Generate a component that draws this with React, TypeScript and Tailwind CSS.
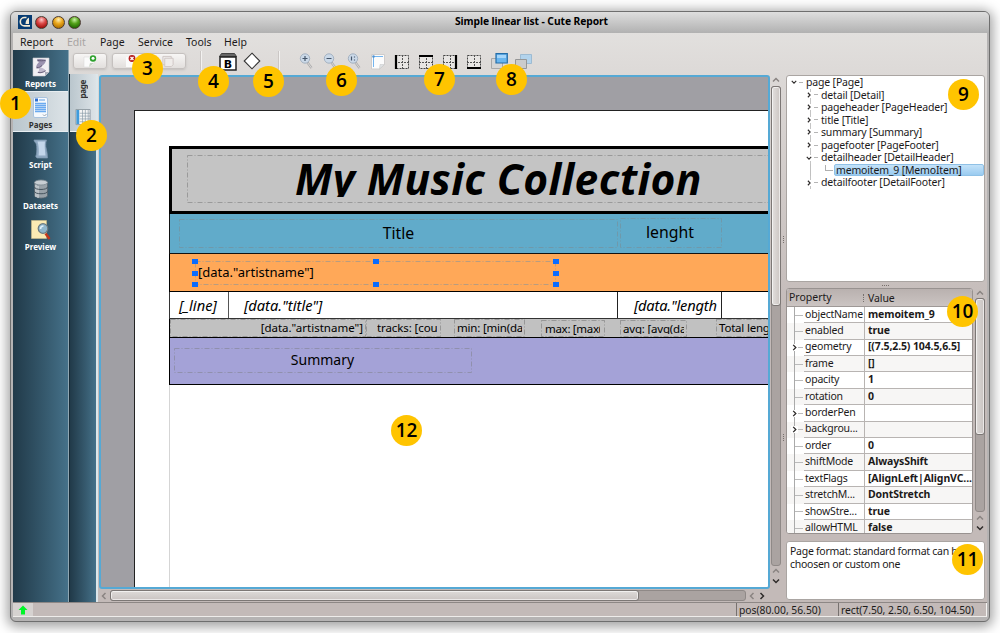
import React from "react";

type ItemProps = { className: string; frame?: string; dash?: string; children?: React.ReactNode };

/** Report item placed freely on the page canvas, with a dash-dot outline. */
function Item({ className, frame = "rgba(110,110,110,.5)", dash = "5 2 1 2", children }: ItemProps) {
  return (
    <div className={`absolute ${className}`}>
      <svg className="absolute inset-0 h-full w-full">
        <rect x="0.5" y="0.5" width="100%" height="100%" fill="none" stroke={frame} strokeDasharray={dash} style={{ width: "calc(100% - 1px)", height: "calc(100% - 1px)" }} />
      </svg>
      {children}
    </div>
  );
}

function Chevron({ dir, className = "", color = "#2e2b2a" }: { dir: "up" | "down" | "left" | "right"; className?: string; color?: string }) {
  const d = { up: "M1 5.5 4 2.5 7 5.5", down: "M1 2.5 4 5.5 7 2.5", left: "M5.5 1 2.5 4 5.5 7", right: "M2.5 1 5.5 4 2.5 7" }[dir];
  return (
    <svg viewBox="0 0 8 8" className={`shrink-0 ${className}`} fill="none" stroke={color} strokeWidth="1.5">
      <path d={d} />
    </svg>
  );
}

function Badge({ n, className }: { n: number; className: string }) {
  return (
    <div className={`absolute z-20 flex h-[31px] w-[31px] items-center justify-center rounded-full bg-[#ffc400] font-['Open_Sans','Noto_Sans',sans-serif] text-[19px] leading-none font-semibold text-black ${className}`}>
      {n}
    </div>
  );
}

const navIcons: Record<string, React.ReactNode> = {
  Reports: (
    <svg viewBox="0 0 18 20" className="h-5 w-[18px]">
      <path d="M1 1h16v14l-4 4H1z" fill="#f1f0f4" stroke="#c9c9d2" strokeWidth=".6" />
      <path d="M17 15h-4v4z" fill="#a9acb9" />
      <path d="M5 2.500c3-.6 6-.6 9 .5 0 3-3 5-5 7-2 1.500-4 2-5 1 0-3 2-5 3-6-1 0-2-.8-2-2.500z" fill="#9b93b0" />
      <path d="M6 10c3 0 6 1 8 4-2 2-6 3-9 1.500 2-1 3-3 1-5.500z" fill="#c0bacd" />
      <path d="M5.500 3.200c2.500.8 5 .8 8 0M5 10.500c2 .5 3-.5 5-2M6 15.500c3 .5 5-.2 7.500-1.800" stroke="#5d5570" strokeWidth=".9" fill="none" />
    </svg>
  ),
  Pages: (
    <svg viewBox="0 0 15 21" className="h-[21px] w-[15px]">
      <rect x=".5" y=".5" width="14" height="20" rx="1.500" fill="#f5f9fd" stroke="#a9c3de" />
      <rect x="2" y="1.500" width="3" height="3" fill="#2c6ed0" />
      <path d="M6 3h6" stroke="#5f9ce0" />
      <path d="M2 6.500h11M2 8.500h11M2 10.500h11M2 12.500h11M2 14.500h11" stroke="#6aaaf0" strokeWidth="1.300" />
      <path d="M10 17.500l1.500 1.500 2-2" stroke="#9aa4b0" fill="none" />
    </svg>
  ),
  Script: (
    <svg viewBox="0 0 16 20" className="h-5 w-4">
      <path d="M1 1h12.500c-1 3-1 6-.2 9s1.200 6 1.200 9H4c-1.500-1-1.500-2-.7-3 .7-4 .7-8 0-11C2.800 3.500 1 3 1 1z" fill="#8fa9c2" stroke="#7f98b0" strokeWidth=".7" />
      <path d="M4.500 2.500h7.500c-.7 4 0 9 .5 14H5.500c.7-4 .3-10-1-14z" fill="#c3d6ea" />
    </svg>
  ),
  Datasets: (
    <svg viewBox="0 0 16 20" className="h-5 w-4">
      <path d="M1.500 3.500v13c0 3.500 13 3.500 13 0v-13z" fill="#98a2a9" stroke="#56646e" strokeWidth=".8" />
      <path d="M3 6v12M5 7v12" stroke="#d3d9dd" strokeWidth="1.200" />
      <ellipse cx="8" cy="3.500" rx="6.500" ry="2.500" fill="#c7ced3" stroke="#7c8992" strokeWidth=".8" />
      <path d="M1.500 8c0 3.300 13 3.300 13 0M1.500 12.300c0 3.300 13 3.300 13 0" stroke="#46545e" fill="none" />
    </svg>
  ),
  Preview: (
    <svg viewBox="0 0 20 20" className="h-5 w-5">
      <path d="M.5.500h15v18H.500z" fill="#fbeab3" stroke="#cdbd8c" strokeWidth=".6" />
      <path d="M14.500 13.500l4 5.500" stroke="#c4361c" strokeWidth="2.500" />
      <circle cx="12" cy="8.500" r="4.800" fill="#8fb6cc" stroke="#6c7a80" strokeWidth="1.200" />
      <path d="M9.500 9a3 3 0 0 1 3-3" stroke="#dfeffa" strokeWidth="1.600" fill="none" />
    </svg>
  ),
};

function NavItem({ name, active = false }: { name: string; active?: boolean }) {
  return (
    <div
      className={
        active
          ? "flex h-[41px] flex-col items-center justify-between border-y border-[#e8eef1] bg-linear-to-r from-[#bac6cd] to-[#dce3e7] pt-[5px] pb-[2px] text-[#303030]"
          : "flex h-[40.700px] flex-col items-center justify-between pt-[7px] pb-[3px] text-white"
      }
    >
      {navIcons[name]}
      <span className="text-[8px] leading-[9px] font-bold whitespace-nowrap">{name}</span>
    </div>
  );
}

function Zoomer({ sign, className = "" }: { sign: string; className?: string }) {
  return (
    <svg viewBox="0 0 14 16" className={`h-4 w-[14px] ${className}`}>
      <path d="M8.500 9.500l4 5.500" stroke="#aaa9aa" strokeWidth="2.200" />
      <path d="M8.500 9.500l4 5.500" stroke="#e6e6e6" strokeWidth=".8" />
      <circle cx="6" cy="5.500" r="4.700" fill="#cbd9e8" stroke="#a3b1c0" />
      <path d={sign} stroke="#44556a" strokeWidth="1.200" fill="none" />
    </svg>
  );
}

function GridIcon({ heavy }: { heavy: string }) {
  return (
    <svg viewBox="0 0 16 16" className="h-4 w-4">
      <rect x="1.500" y="1.500" width="13" height="13" fill="#e8e6e4" stroke="#444" strokeDasharray="2 1" />
      <path d="M8.500 1v14M1 8.500h14" stroke="#555" strokeDasharray="2 1" />
      <path d={heavy} stroke="#000" strokeWidth="2.200" />
    </svg>
  );
}

function Separator({ className = "" }: { className?: string }) {
  return <div className={`h-[19px] w-px bg-[#cbc7c5] shadow-[1px_0_0_#f3f2f1] ${className}`} />;
}

function Toolbar() {
  return (
    <div className="flex h-[25px] items-start pl-[4px]">
      <div className="mt-[3px] flex h-[16px] w-[34px] items-center justify-center rounded-[3px] border border-[#c5c1bf] bg-linear-to-b from-[#f7f6f5] to-[#e2dfdd] shadow-sm">
        <svg viewBox="0 0 14 13" className="-ml-px h-[13px] w-[14px]">
          <path d="M1 2h10v7l-4 3H1z" fill="#fbfbfb" stroke="#d6d6d6" strokeWidth=".5" />
          <path d="M11 8l-5 4 1-4z" fill="#c9d2c4" />
          <circle cx="10" cy="3.500" r="3.200" fill="#2da12d" />
          <circle cx="10" cy="3.200" r="1.500" fill="#fff" />
        </svg>
      </div>
      <div className="mt-[3px] ml-[5px] flex h-[16px] w-[74px] items-center rounded-[3px] border border-[#c5c1bf] bg-linear-to-b from-[#f7f6f5] to-[#e2dfdd] pl-[12px] shadow-sm">
        <svg viewBox="0 0 14 13" className="h-[13px] w-[14px]">
          <path d="M1 2h8v10H1z" fill="#fbfbfb" />
          <circle cx="7" cy="3.500" r="3.400" fill="#b61f1f" />
          <path d="M5.500 2l3 3m0-3l-3 3" stroke="#fff" strokeWidth="1.300" />
        </svg>
        <svg viewBox="0 0 14 14" className="ml-[22px] h-[13px] w-[14px]" fill="#efecea" stroke="#cdc5c2">
          <path d="M1.500 1.500h9v9h-9z" />
          <path d="M3.500 3.500h9v7l-2 2h-7z" />
        </svg>
      </div>
      <Separator className="mt-px ml-[14px]" />
      <svg viewBox="0 0 18 18" className="mt-[3px] ml-[18px] h-[18px] w-[18px]">
        <path d="M2.500.500h13l2 3H.500z" fill="#666" stroke="#444" />
        <rect x="1" y="4" width="16" height="13" fill="#fff" stroke="#222" strokeWidth="1.500" />
        <text x="9" y="14.500" textAnchor="middle" className="font-['DejaVu_Sans',sans-serif] text-[11px] font-bold">B</text>
      </svg>
      <svg viewBox="0 0 18 18" className="mt-[2px] ml-[6px] h-[18px] w-[18px]">
        <path d="M9 1.200L16.800 9 9 16.800 1.200 9z" fill="#fff" stroke="#333" strokeWidth="1.100" />
      </svg>
      <Separator className="mt-px ml-[17px]" />
      <div className="mt-[3px] ml-[20px] flex gap-[10px]">
        <Zoomer sign="M3.500 5.500h5M6 3v5" />
        <Zoomer sign="M3.500 5.500h5" />
        <Zoomer sign="M4.500 3.500v4M7.500 3.500v1M7.500 6.500v1" />
      </div>
      <svg viewBox="0 0 16 17" className="mt-[3px] ml-[9px] h-[17px] w-4">
        <path d="M1.500 1.500h13v10l-5 4.500h-8z" fill="#fcfcfc" stroke="#cfcccb" />
        <path d="M14.500 11.500h-4.500l-.5 4.500z" fill="#e0e3e5" stroke="#c5c5c5" strokeWidth=".5" />
        <path d="M3.500 14V3.500H13" stroke="#74b5ef" fill="none" />
        <circle cx="3.500" cy="3.500" r="1.300" fill="#5493cf" />
      </svg>
      <div className="mt-[4px] ml-[8px] flex gap-[8px]">
        <GridIcon heavy="M2 1v14" />
        <GridIcon heavy="M1 2h14" />
        <GridIcon heavy="M14 1v14" />
        <GridIcon heavy="M1 14h14" />
      </div>
      <svg viewBox="0 0 18 17" className="mt-[3px] ml-[8px] h-[17px] w-[18px]">
        <path d="M1.500 5.500h11v10h-11z" fill="#d5d5d5" stroke="#a8a8a8" />
        <path d="M6 .700h11.300v9.300H6z" fill="#69b6f0" stroke="#246da8" strokeWidth="1.200" />
        <path d="M7 2h9v3H7z" fill="#a6d6fa" />
      </svg>
      <svg viewBox="0 0 18 17" className="mt-[3px] ml-[6px] h-[17px] w-[18px]">
        <path d="M6.500 1.500h11v9h-11z" fill="#b2d3ec" stroke="#9dbbd2" />
        <path d="M1.500 6.500h11v9h-11z" fill="#cbcbcb" stroke="#969696" />
      </svg>
    </div>
  );
}

function Handles() {
  const dot = "absolute h-[5px] w-[6px] bg-[#0a6cff]";
  return (
    <>
      <i className={`${dot} -top-[2px] -left-[3px]`} />
      <i className={`${dot} top-[10px] -left-[3px]`} />
      <i className={`${dot} -bottom-[2px] -left-[3px]`} />
      <i className={`${dot} -top-[2px] left-[178px]`} />
      <i className={`${dot} -bottom-[2px] left-[178px]`} />
      <i className={`${dot} -top-[2px] -right-[3px]`} />
      <i className={`${dot} top-[10px] -right-[3px]`} />
      <i className={`${dot} -right-[3px] -bottom-[2px]`} />
    </>
  );
}

function ReportPage() {
  return (
    <div className="mt-[33px] ml-[33px] h-[480px] w-[640px] shrink-0 border-t border-l border-[#222] bg-white pt-[35px] pl-[34px] text-black">
      <div className="relative h-[68px] border-[3px] border-black bg-[#c4c4c4]">
        <Item className="top-[6px] left-[15px] h-[48px] w-[620px]" frame="#9a9a9a">
          <span className="absolute -top-px left-[108px] h-[43px] overflow-hidden pr-2 text-[42.500px] leading-[49px] font-bold tracking-[0.400px] whitespace-nowrap italic">My Music Collection</span>
        </Item>
      </div>
      <div className="relative h-[40px] border-b border-l border-[#111] bg-[#61abca]">
        <Item className="top-[5px] left-[9px] h-[29px] w-[439px]" frame="#6f99ab">
          <span className="absolute inset-x-0 top-[4px] text-center text-[15.800px] leading-5">Title</span>
        </Item>
        <Item className="top-[4px] left-[450px] h-[30px] w-[102px]" frame="#6f99ab">
          <span className="absolute inset-x-0 top-[4px] pr-[2px] text-center text-[15.800px] leading-5">lenght</span>
        </Item>
      </div>
      <div className="relative h-[38px] border-b border-l border-black bg-[#ffa858]">
        <Item className="top-[7px] left-[25px] h-[24px] w-[361px]" frame="#b89c80">
          <span className="absolute top-[2px] left-[3px] text-[13px] leading-[18px] whitespace-nowrap">[data."artistname"]</span>
          <Handles />
        </Item>
      </div>
      <div className="relative h-[27px] border-b border-l border-[#333] text-[14.700px] leading-[26px] italic">
        <div className="flex h-full">
          <span className="w-[59px] border-r border-[#555] pl-[9px] whitespace-nowrap">[_line]</span>
          <span className="w-[389px] border-r border-[#222] pl-[15px] whitespace-nowrap">[data."title"]</span>
          <span className="w-[104px] overflow-hidden border-r border-[#222] pl-[16px] tracking-[-0.200px] whitespace-nowrap">[data."length</span>
        </div>
      </div>
      <div className="relative h-[19px] border-b border-l border-black bg-[#c1c1c1] text-[11.500px] leading-[17px] whitespace-nowrap">
        <Item className="top-0 left-0 h-[18px] w-[196px]"><span className="absolute right-[3px]">[data."artistname"]</span></Item>
        <Item className="top-0 left-[196px] h-[18px] w-[75px]"><span className="absolute left-[11px] w-[60px] overflow-hidden tracking-[-0.100px]">tracks: [count</span></Item>
        <Item className="top-0 left-[284px] h-[18px] w-[71px]"><span className="absolute left-[3px] w-[65px] overflow-hidden tracking-[-0.200px]">min: [min(data</span></Item>
        <Item className="top-px left-[371px] h-[17px] w-[64px]"><span className="absolute left-[4px] w-[55px] overflow-hidden tracking-[-0.300px]">max: [max(</span></Item>
        <Item className="top-px left-[450px] h-[17px] w-[67px]"><span className="absolute left-[3px] h-[14px] w-[61px] overflow-hidden tracking-[-0.200px]">avg: [avg(data</span></Item>
        <Item className="top-0 left-[546px] h-[18px] w-[90px]"><span className="absolute left-[3px] tracking-[-0.200px]">Total length</span></Item>
      </div>
      <div className="relative h-[47px] border-b border-l border-black bg-[#a4a2d7]">
        <Item className="top-[10px] left-[4px] h-[25px] w-[298px]" frame="#9090ad">
          <span className="absolute inset-x-0 top-[2px] pr-px text-center text-[14px] leading-[20px]">Summary</span>
        </Item>
      </div>
      <div className="h-[210px] border-l border-[#d5d5d5]" />
    </div>
  );
}

const groove = "rounded-[3px] border border-[#8f8987] bg-[#aaa3a1]";
const thumb = "rounded-[3px] border border-[#7c7775] shadow-[inset_0_0_0_1px_rgba(255,255,255,.6)]";

const tree: { text: string; depth: number; open?: boolean; selected?: boolean }[] = [
  { text: "page [Page]", depth: 0, open: true },
  { text: "detail [Detail]", depth: 1 },
  { text: "pageheader [PageHeader]", depth: 1 },
  { text: "title [Title]", depth: 1 },
  { text: "summary [Summary]", depth: 1 },
  { text: "pagefooter [PageFooter]", depth: 1 },
  { text: "detailheader [DetailHeader]", depth: 1, open: true },
  { text: "memoitem_9 [MemoItem]", depth: 2, selected: true },
  { text: "detailfooter [DetailFooter]", depth: 1 },
];

function ObjectTree() {
  return (
    <div className="h-[207px] rounded-[3px] border border-[#aaa5a2] bg-white text-[10.500px] leading-[12.500px] tracking-[-0.170px]">
      {tree.map((row) => (
        <div key={row.text} className="flex h-[12.550px] items-center whitespace-nowrap">
          {row.depth > 0 && <span className="w-[15px] shrink-0" />}
          {row.selected ? (
            <>
              <span className="ml-[8px] h-full w-[15px] shrink-0 border-l border-[#c0c0c0]" />
              <span className="mb-[5px] h-[6px] w-[8px] shrink-0 border-b border-l border-[#b0b0b0]" />
              <span className="ml-px h-full flex-1 rounded-[2px] border border-[#8fc1e6] bg-linear-to-b from-[#c3e2f9] to-[#9acbf0] pl-px leading-[11px]">{row.text}</span>
            </>
          ) : (
            <>
              <span className={row.depth > 0 ? "ml-[4px] flex h-full w-[6px] flex-col items-center bg-[linear-gradient(#c4c4c4,#c4c4c4)] bg-[length:1px_100%] bg-[position:4px_0] bg-no-repeat" : "ml-[4px] flex h-full w-[6px] flex-col items-center"}>
                <Chevron dir={row.open ? "down" : "right"} className="my-auto h-[6px] w-[6px] bg-white" />
              </span>
              <span className="mr-[3px] ml-[2px] h-px w-[4px] shrink-0 bg-[#b5b5b5]" />
              <span>{row.text}</span>
            </>
          )}
        </div>
      ))}
    </div>
  );
}

const properties: [string, string, boolean?][] = [
  ["objectName", "memoitem_9"],
  ["enabled", "true"],
  ["geometry", "[(7.5,2.5) 104.5,6.5]", true],
  ["frame", "[]"],
  ["opacity", "1"],
  ["rotation", "0"],
  ["borderPen", "", true],
  ["backgrou...", "", true],
  ["order", "0"],
  ["shiftMode", "AlwaysShift"],
  ["textFlags", "[AlignLeft|AlignVC..."],
  ["stretchM...", "DontStretch"],
  ["showStre...", "true"],
  ["allowHTML", "false"],
];

function PropertyTable() {
  return (
    <div className="flex h-[246px] gap-[2px]">
      <div className="flex w-[187px] flex-col overflow-hidden rounded-[3px] border border-[#989290] bg-white text-[10.500px]">
        <div className="flex h-[17.800px] shrink-0 items-center border-b border-[#9e9896] bg-linear-to-b from-[#b9b1af] to-[#cbc4c2] pt-px">
          <span className="w-[76px] pl-[2px]">Property</span>
          <span className="h-[8px] border-l border-dotted border-[#77706d] pl-[4px] leading-[8px] tracking-[-0.100px]">Value</span>
        </div>
        {properties.map(([name, value, expandable], i) => (
          <div key={name} className={`flex h-[16.420px] shrink-0 items-center whitespace-nowrap ${i % 2 ? "bg-[#f7f6f5]" : "bg-white"}`}>
            <span className="flex h-full w-[8px] shrink-0 items-center justify-end border-r border-[#aaa]" />
            {expandable ? <Chevron dir="right" className="-ml-[4px] h-[7px] w-[7px] bg-white" /> : <span className="w-[3px] shrink-0 border-t border-[#bbb]" />}
            <span className="h-px w-[5px] shrink-0 bg-[#bbb]" />
            <span className="ml-px flex h-full w-[61px] shrink-0 items-center border-r border-b border-[#b8b4b2] pl-px tracking-[-0.200px]">{name}</span>
            <span className="flex h-full flex-1 items-center overflow-hidden border-b border-[#b8b4b2] pl-[3px] font-bold tracking-[-0.120px]">{value}</span>
          </div>
        ))}
      </div>
      <div className="flex w-[10px] flex-col items-center">
        <Chevron dir="up" color="#8a8482" className="mt-px mb-[1px] h-[8px] w-[8px]" />
        <div className={`h-[214px] w-[10px] ${groove}`}>
          <div className={`-m-px h-[137px] bg-linear-to-r from-[#dcd9d7] to-[#c9c3c1] ${thumb}`} />
        </div>
        <Chevron dir="up" color="#8a8482" className="mt-[2px] h-[8px] w-[8px]" />
        <Chevron dir="down" className="mt-[2px] h-[8px] w-[8px]" />
      </div>
    </div>
  );
}

const orbs = [
  "bg-[radial-gradient(circle_at_50%_25%,#ffc9c9_0%,#dc4a48_40%,#a3100f_80%)]",
  "bg-[radial-gradient(circle_at_50%_25%,#fff0b5_0%,#eca91d_40%,#b37300_80%)]",
  "bg-[radial-gradient(circle_at_50%_25%,#c9f3a5_0%,#55a31a_40%,#236b02_80%)]",
];

const menus: [string, string][] = [
  ["Report", "w-[47px]"],
  ["Edit", "w-[33px] text-[#a8a4a2]"],
  ["Page", "w-[38px]"],
  ["Service", "w-[48px]"],
  ["Tools", "w-[38px]"],
  ["Help", "w-[30px]"],
];

export default function App() {
  return (
    <div className="relative h-[633px] w-[1000px] overflow-hidden bg-white px-[10px] pt-[11px] font-['Noto_Sans','Open_Sans',sans-serif] text-[#1c1a1a]">
      <div className="flex h-[611px] w-[980px] flex-col overflow-hidden rounded-[6px] border border-[#6e6e6e] bg-[#b5b3b3] px-[2px] shadow-[0_2px_12px_3px_rgba(0,0,0,.36)]">
        <div className="relative -mx-[2px] flex h-[21px] shrink-0 items-center bg-linear-to-b from-[#dedede] to-[#b1b1b1] pl-[7px]">
          <svg viewBox="0 0 14 14" className="-mt-px h-[14px] w-[14px]">
            <path d="M0 0h14v14H0z" fill="#073c73" />
            <path d="M8.500 2.500H6.500a4.200 4.200 0 0 0 0 8.400H12" fill="none" stroke="#f3ead4" strokeWidth="1.600" />
            <path d="M7.500 9c0-3 1-5 3.500-6.500V9z" fill="#f3ead4" />
          </svg>
          <div className="-mt-px ml-[3px] flex gap-[3.500px]">
            {orbs.map((orb) => (
              <span key={orb} className={`h-[13px] w-[13px] rounded-full border border-[#4a3a30] ${orb}`} />
            ))}
          </div>
          <span className="absolute inset-x-0 -top-px pl-[63px] text-center text-[10.300px] leading-[21px] font-bold tracking-[-0.080px] text-black">Simple linear list - Cute Report</span>
        </div>

        <div className="flex min-h-0 flex-1 flex-col bg-[linear-gradient(to_bottom,#e2e0de_0px,#dad6d4_60px,#c3bab8_290px)]">
          <div className="flex h-[17px] shrink-0 items-center pl-[7px] text-[10.500px] leading-[17px]">
            {menus.map(([label, cls]) => (
              <span key={label} className={`pt-[2px] ${cls}`}>{label}</span>
            ))}
          </div>

          <div className="flex h-[552px] shrink-0">
            <nav className="flex w-[56px] shrink-0 flex-col border-r border-[#8ea6b2] bg-linear-to-r from-[#213a49] to-[#457189]">
              <NavItem name="Reports" />
              <NavItem name="Pages" active />
              <NavItem name="Script" />
              <NavItem name="Datasets" />
              <NavItem name="Preview" />
            </nav>
            <div className="flex flex-1 flex-col">
              <Toolbar />
              <div className="flex h-[527px]">
                <div className="-mt-px flex w-[29px] shrink-0 flex-col border-r-2 border-l border-[#152a36] border-r-[#dce6ea] bg-linear-to-r from-[#213a49] to-[#457189]">
                  <div className="flex h-[58px] flex-col items-center justify-between border-b border-[#eef2f4] bg-linear-to-r from-[#bac6cd] to-[#dce3e7] pt-[6px] pb-[5px]">
                    <span className="rotate-180 text-[8px] leading-[12px] font-bold tracking-[-0.300px] text-[#333] [writing-mode:vertical-rl]">page</span>
                    <svg viewBox="0 0 16 18" className="h-[17px] w-4">
                      <path d="M.5.500h15v16H.500z" fill="#f5f5f5" stroke="#8f9ba3" />
                      <path d="M1 1h3v15H1z" fill="#3e9bdc" />
                      <path d="M4.500 4.500h11M4.500 7.500h11M4.500 10.500h11M4.500 13.500h11M7.500 1v15M10.500 1v15M13.500 1v15" stroke="#8799a5" strokeWidth=".7" />
                    </svg>
                  </div>
                </div>
                <div className="flex w-[672px] shrink-0 flex-col pl-[1px]">
                  <div className="h-[514px] w-[671px] overflow-hidden rounded-[3px] border-2 border-[#55a9d5] bg-[#a09fa4]">
                    <ReportPage />
                  </div>
                  <div className="flex h-[13px] items-center pl-[1px]">
                    <Chevron dir="left" color="#8a8482" className="h-[8px] w-[8px]" />
                    <div className={`ml-[2px] h-[11px] w-[636px] ${groove}`}>
                      <div className={`-m-px h-[11px] w-[529px] bg-linear-to-b from-[#dedbd9] to-[#c9c3c1] ${thumb}`} />
                    </div>
                    <Chevron dir="left" color="#8a8482" className="ml-[2px] h-[8px] w-[8px]" />
                    <Chevron dir="right" className="ml-[2px] h-[8px] w-[8px]" />
                  </div>
                </div>
                <div className="flex w-[11px] shrink-0 flex-col items-center">
                  <Chevron dir="up" color="#8a8482" className="mt-px mb-[2px] h-[8px] w-[8px]" />
                  <div className={`h-[480px] w-[10px] ${groove}`}>
                    <div className={`-m-px h-[220px] bg-linear-to-r from-[#e3e0de] to-[#cbc5c2] ${thumb}`} />
                  </div>
                  <Chevron dir="up" color="#8a8482" className="mt-[1px] h-[8px] w-[8px]" />
                  <Chevron dir="down" className="mt-[2px] h-[8px] w-[8px]" />
                </div>
                <div className="flex w-[5px] shrink-0 flex-col items-center justify-around pt-[65px] pb-[65px]">
                  <span className="h-[7px] border-l border-dotted border-[#77706d]" />
                  <span className="h-[7px] border-l border-dotted border-[#77706d]" />
                </div>
                <div className="flex w-[199px] shrink-0 flex-col">
                  <ObjectTree />
                  <div className="flex h-[6px] items-center justify-center">
                    <span className="w-[7px] border-t border-dotted border-[#77706d]" />
                  </div>
                  <PropertyTable />
                  <div className="mt-[7px] h-[59px] rounded-[3px] border border-[#aaa5a2] bg-white px-[3px] pt-[3px] text-[10.500px] leading-[12.500px] tracking-[-0.270px]">
                    Page format: standard format can be
                    <br />
                    choosen or custom one
                  </div>
                </div>
              </div>
            </div>
          </div>

          <div className="mt-px flex h-[14px] shrink-0 border-b border-[#eeecea] text-[10.300px] leading-[14px] shadow-[0_-1px_0_#8d8785]">
            <div className="flex w-[20px] items-center justify-center bg-[#d6d2d0]">
              <svg viewBox="0 0 10 10" className="h-[10px] w-[10px]">
                <path d="M5 .5L9.500 5H7v4.500H3V5H.500z" fill="#00f528" />
              </svg>
            </div>
            <div className="flex-1" />
            <span className="w-[102px] border-l border-[#77716f] pl-[2px] whitespace-nowrap">pos(80.00, 56.50)</span>
            <span className="w-[149px] border-x border-[#77716f] border-r-[#f4f3f2] pl-[2px] tracking-[-0.050px] whitespace-nowrap">rect(7.50, 2.50, 6.50, 104.50)</span>
          </div>
        </div>
        <div className="h-[4px] shrink-0" />
      </div>

      <Badge n={1} className="top-[88px] left-0" />
      <Badge n={2} className="top-[120px] left-[76px]" />
      <Badge n={3} className="top-[53px] left-[132px]" />
      <Badge n={4} className="top-[66px] left-[198px]" />
      <Badge n={5} className="top-[66px] left-[253px]" />
      <Badge n={6} className="top-[65px] left-[326px]" />
      <Badge n={7} className="top-[64px] left-[424px]" />
      <Badge n={8} className="top-[64px] left-[496px]" />
      <Badge n={9} className="top-[79px] left-[948px]" />
      <Badge n={10} className="top-[296px] left-[947px]" />
      <Badge n={11} className="top-[544px] left-[952px]" />
      <Badge n={12} className="top-[415px] left-[391px]" />
    </div>
  );
}
